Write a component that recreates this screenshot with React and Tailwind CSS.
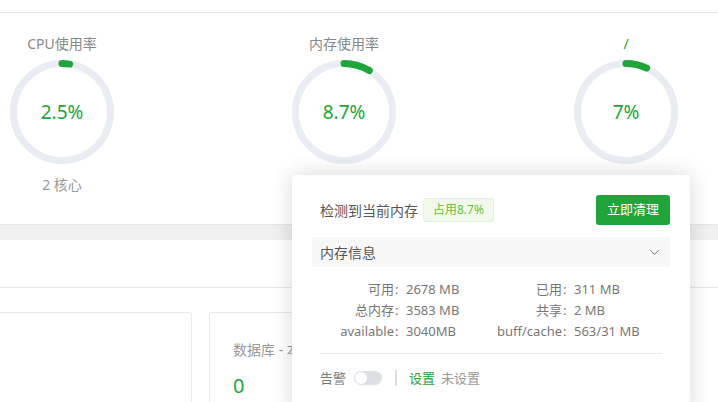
import { ChevronDown } from 'lucide-react';

const gauges = [
  { title: 'CPU使用率', value: '2.5%', pct: 2.5, sub: '2 核心' },
  { title: '内存使用率', value: '8.7%', pct: 8.7 },
  { title: '/', value: '7%', pct: 7, green: true },
];

function Ring({ pct, value }) {
  const r = 48.5;
  const c = 2 * Math.PI * r;
  return (
    <div className="relative w-[104px] h-[104px]">
      <svg width="104" height="104" viewBox="0 0 104 104">
        <circle cx="52" cy="52" r={r} fill="none" stroke="#e9ecf3" strokeWidth="7" />
        <circle
          cx="52"
          cy="52"
          r={r}
          fill="none"
          stroke="#20a53a"
          strokeWidth="7"
          strokeLinecap="round"
          strokeDasharray={`${(pct / 100) * c} ${c}`}
          transform="rotate(-90 52 52)"
        />
      </svg>
      <div className="absolute inset-0 flex items-center justify-center text-[19px] text-[#20a53a]">{value}</div>
    </div>
  );
}

const info = [
  ['可用', '2678 MB', '已用', '311 MB'],
  ['总内存', '3583 MB', '共享', '2 MB'],
  ['available', '3040MB', 'buff/cache', '563/31 MB'],
];

function Label({ text }) {
  return (
    <span className="text-right">
      {text}
      <span className="inline-block w-[10px] pl-[1px] text-left">:</span>
    </span>
  );
}

export default function App() {
  return (
    <div
      className="relative w-[718px] h-[402px] overflow-hidden bg-white"
      style={{ fontFamily: '"Noto Sans", "Noto Sans CJK SC", sans-serif' }}
    >
      <div className="h-[13px] border-b border-[#e8e8e8]" />

      <div className="flex gap-[178px] pl-[10px] pt-[21px] h-[211px]">
        {gauges.map((g) => (
          <div key={g.title} className="w-[104px] flex flex-col items-center">
            <div className={`text-[14px] leading-[20px] ${g.green ? 'text-[#20a53a]' : 'text-[#888]'}`}>{g.title}</div>
            <div className="mt-[6px]">
              <Ring pct={g.pct} value={g.value} />
            </div>
            {g.sub && <div className="mt-[11px] text-[14px] leading-[20px] text-[#999]">{g.sub}</div>}
          </div>
        ))}
      </div>

      <div className="h-[16px] bg-[#f0f0f0] border-t border-[#e6e6e6]" />
      <div className="h-[48px] border-b border-[#e8e8e8]" />

      <div className="flex gap-[17px] -ml-[10px] mt-[24px]">
        <div className="w-[202px] h-[120px] border border-[#e8e8e8] rounded-[2px]" />
        <div className="w-[300px] h-[120px] border border-[#e8e8e8] rounded-[2px] pl-[23px] pt-[27px]">
          <div className="text-[14px] leading-[20px] text-[#999]">数据库 - 本地</div>
          <div className="mt-[14px] text-[20px] leading-[24px] text-[#20a53a]">0</div>
        </div>
      </div>

      <div className="absolute left-[292px] top-[175px] w-[398px] h-[240px] bg-white rounded-[4px] shadow-[0_0_22px_rgba(0,0,0,0.16)] px-[20px] pt-[20px]">
        <div className="flex items-center justify-between h-[30px]">
          <div className="flex items-center pl-[8px]">
            <span className="text-[14px] text-[#555]">检测到当前内存</span>
            <span className="ml-[5px] h-[24px] px-[9px] flex items-center text-[12px] text-[#67c23a] bg-[#f0f9eb] border border-[#e1f3d8] rounded-[3px]">
              占用8.7%
            </span>
          </div>
          <button className="w-[74px] h-[30px] bg-[#20a53a] text-white text-[13px] rounded-[3px]">立即清理</button>
        </div>

        <div className="mt-[12px] h-[30px] bg-[#f7f7f7] flex items-center justify-between pl-[8px] pr-[8px]">
          <span className="text-[14px] text-[#555]">内存信息</span>
          <ChevronDown size={15} strokeWidth={1.5} className="text-[#666]" />
        </div>

        <div className="mt-[12px] grid grid-cols-[92px_86px_82px_98px] text-[13px] leading-[21px] text-[#777]">
          {info.map((row) => (
            <div key={row[0]} className="contents">
              <Label text={row[0]} />
              <span className="pl-[2px]">{row[1]}</span>
              <Label text={row[2]} />
              <span className="pl-[2px]">{row[3]}</span>
            </div>
          ))}
        </div>

        <div className="mx-[8px] mt-[11px] border-t border-[#eaeaea]" />

        <div className="mt-[14px] pl-[8px] flex items-center text-[13px] leading-[20px]">
          <span className="text-[#777]">告警</span>
          <span className="ml-[8px] w-[28px] h-[14px] rounded-full bg-[#dcdfe6] flex items-center px-[1px]">
            <span className="w-[12px] h-[12px] rounded-full bg-white" />
          </span>
          <span className="ml-[13px] w-[2px] h-[16px] bg-[#e0e0e0]" />
          <span className="ml-[12px] text-[#20a53a]">设置</span>
          <span className="ml-[6px] text-[#999]">未设置</span>
        </div>
      </div>
    </div>
  );
}
